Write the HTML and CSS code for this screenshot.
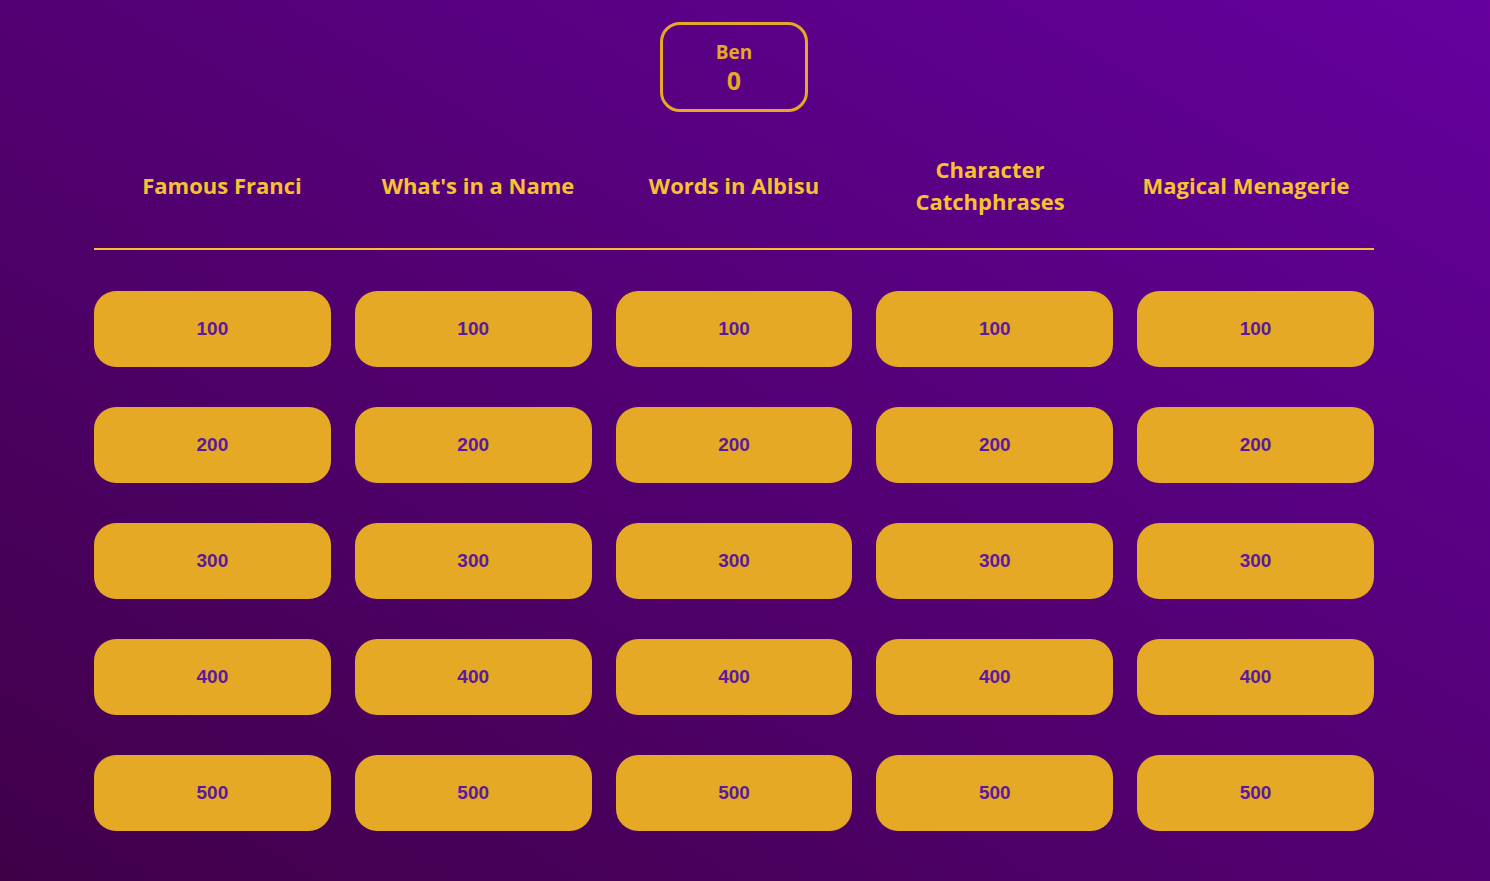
FILE: index.html
```html
<!DOCTYPE html>
<html>
<head>
<meta charset="utf-8">
<link rel="stylesheet" href="styles.css">
</head>
<body>
<main class="page">
  <div class="board-wrap">
    <div class="players">
      <div class="player">
        <div class="player-name">Ben</div>
        <div class="player-score">0</div>
      </div>
    </div>
    <div class="categories">
      <div class="category">Famous Franci</div>
      <div class="category">What's in a Name</div>
      <div class="category">Words in Albisu</div>
      <div class="category">Character Catchphrases</div>
      <div class="category">Magical Menagerie</div>
    </div>
    <div class="grid">
      <button class="tile">100</button><button class="tile">100</button><button class="tile">100</button><button class="tile">100</button><button class="tile">100</button>
      <button class="tile">200</button><button class="tile">200</button><button class="tile">200</button><button class="tile">200</button><button class="tile">200</button>
      <button class="tile">300</button><button class="tile">300</button><button class="tile">300</button><button class="tile">300</button><button class="tile">300</button>
      <button class="tile">400</button><button class="tile">400</button><button class="tile">400</button><button class="tile">400</button><button class="tile">400</button>
      <button class="tile">500</button><button class="tile">500</button><button class="tile">500</button><button class="tile">500</button><button class="tile">500</button>
    </div>
  </div>
</main>
</body>
</html>
```

FILE: styles.css
```css
html, body {
  margin: 0;
  height: 100%;
}
body {
  background: linear-gradient(to top right, #400048 0%, #65009e 100%);
  font-family: "Trebuchet MS", "Open Sans", "Lato", sans-serif;
  overflow: hidden;
}
.page {
  padding: 22px 22px 0 0;
}
.board-wrap {
  max-width: 1280px;
  margin: 0 auto;
}
.players {
  display: flex;
  justify-content: center;
}
.player {
  width: 142px;
  height: 84px;
  border: 3px solid #e5a925;
  border-radius: 20px;
  display: flex;
  flex-direction: column;
  align-items: center;
  justify-content: center;
  color: #e5a925;
  font-weight: 700;
}
.player-name {
  font-size: 19px;
  line-height: 24px;
  margin-top: 2px;
}
.player-score {
  font-size: 25px;
  line-height: 32px;
}
.categories {
  display: grid;
  grid-template-columns: repeat(5, 1fr);
  margin-top: 29px;
  border-bottom: 2px solid #f7c02f;
}
.category {
  min-height: 88px;
  padding: 0 18px 19px;
  display: flex;
  align-items: center;
  justify-content: center;
  text-align: center;
  color: #f7c231;
  font-size: 22px;
  font-weight: 700;
  line-height: 32px;
}
.grid {
  display: grid;
  grid-template-columns: repeat(5, 1fr);
  column-gap: 24px;
  row-gap: 40px;
  margin-top: 41px;
}
.tile {
  height: 76px;
  border: none;
  border-radius: 22px;
  background: #e5a925;
  color: #5b1a9c;
  font-family: "Liberation Sans", Arial, sans-serif;
  font-size: 19px;
  font-weight: 700;
  padding: 0;
}
```
